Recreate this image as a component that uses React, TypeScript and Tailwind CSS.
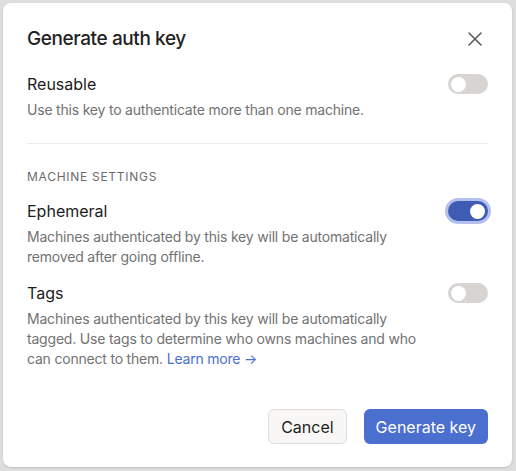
import React from 'react';

const font = { fontFamily: 'Inter, "Noto Sans", sans-serif' };

function Toggle({ on }: { on?: boolean }) {
  if (on) {
    return (
      <div className="rounded-full p-[3px] bg-[#b3c1ec]">
        <div className="w-[40px] h-[20px] rounded-full bg-[#3f5cb4] flex items-center justify-end px-[3px]">
          <div className="w-[15px] h-[15px] rounded-full bg-white" />
        </div>
      </div>
    );
  }
  return (
    <div className="w-[40px] h-[20px] rounded-full bg-[#d8d4d2] flex items-center px-[3px]">
      <div className="w-[15px] h-[15px] rounded-full bg-white" />
    </div>
  );
}

function Setting({
  label,
  on,
  children
}: {
  label: string;
  on?: boolean;
  children: React.ReactNode;
}) {
  return (
    <div>
      <div className="flex items-center justify-between h-[24px]">
        <span className="text-[16px] leading-[24px] text-[#1c1c1c]">{label}</span>
        <div className={on ? 'mr-[-3px]' : ''}>
          <Toggle on={on} />
        </div>
      </div>
      <p className="mt-[4px] text-[14px] leading-[20px] tracking-[-0.2px] text-[#727272] max-w-[392px]">
        {children}
      </p>
    </div>
  );
}

export default function App() {
  return (
    <div className="w-[516px] h-[471px] bg-[#dedede] pt-[3px] pl-[3px]" style={font}>
      <div className="w-[509px] h-[464px] bg-white rounded-[8px] px-6 pt-[22px] pb-[23px] flex flex-col shadow-sm">
        {/* header */}
        <div className="flex items-center justify-between h-[28px]">
          <h1 className="text-[19px] leading-[28px] font-medium tracking-[-0.4px] text-[#222]">Generate auth key</h1>
          <svg width="16" height="16" viewBox="0 0 16 16" className="mr-[5px]">
            <path d="M2 2L14 14M14 2L2 14" stroke="#555" strokeWidth="1.5" strokeLinecap="round" />
          </svg>
        </div>

        <div className="mt-[19px]">
          <Setting label="Reusable">Use this key to authenticate more than one machine.</Setting>
        </div>

        <div className="mt-[23px] h-px bg-[#ececec]" />

        <div className="mt-[24px] text-[12px] leading-[18px] tracking-[0.06em] text-[#6b6b6b] uppercase">
          Machine settings
        </div>

        <div className="mt-[13px]">
          <Setting label="Ephemeral" on>
            Machines authenticated by this key will be automatically removed after going offline.
          </Setting>
        </div>

        <div className="mt-[14px]">
          <Setting label="Tags">
            Machines authenticated by this key will be automatically tagged. Use tags to determine who
            owns machines and who can connect to them.{' '}
            <span className="text-[#4a6fcf]">Learn more →</span>
          </Setting>
        </div>

        <div className="mt-auto flex justify-end gap-[17px]">
          <button className="h-[35px] px-[12px] rounded-[6px] border border-[#dcdcdc] bg-[#f8f7f6] text-[16px] text-[#1f1f1f]">
            Cancel
          </button>
          <button className="h-[35px] px-[12px] rounded-[6px] bg-[#4a6fcf] text-[16px] text-white">
            Generate key
          </button>
        </div>
      </div>
    </div>
  );
}
